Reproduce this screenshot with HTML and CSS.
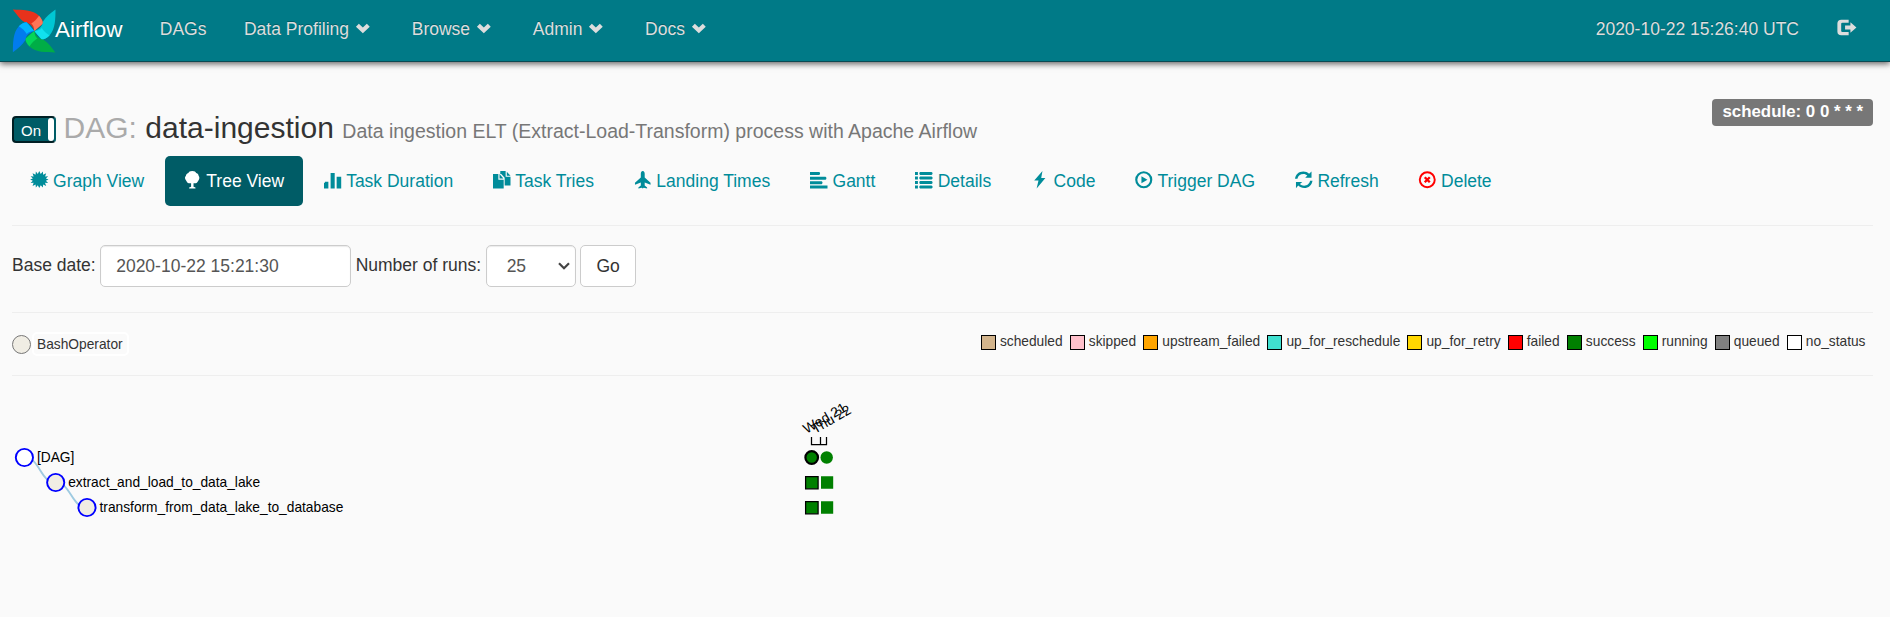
FILE: index.html
```html
<!DOCTYPE html>
<html lang="en">
<head>
<meta charset="utf-8">
<title>Airflow - data-ingestion</title>
<link rel="stylesheet" href="styles.css">
</head>
<body>
<svg class="defs" width="0" height="0">
  <symbol id="chev" viewBox="0 0 18 18"><path d="M2 8 5 5 9.100 8.800 13.200 5 16.200 8 9.100 14.600Z"/></symbol>
</svg>
<nav class="navbar">
  <a class="brand">
    <svg class="logo" width="44" height="44" viewBox="0 0 44 44">
      <path fill="#e8321c" d="M.8.4C10 .8 21 .6 27 6.8c2.500 2.700 3.800 5.600 4 7.600L22.300 22C20.400 15.500 16 13.600 12.500 13 7.800 10.500 5 5.500.8.4Z"/>
      <path fill="#ff7557" d="M27 6.800c2.500 2.700 3.800 5.600 4 7.600L22.300 22c-.2-4-1.300-6-3-7.500C22 13 25 10 27 6.800Z"/>
      <path fill="#00c7d4" d="M43.500.6C43.400 10 43.500 20 37.500 26.500c-2.700 2.700-5.500 3.700-7.800 4L22.300 22c6-2 8.200-5.500 8.700-9.500C34 7.500 38.500 4.500 43.500.6Z"/>
      <path fill="#11e1ee" d="M37.500 26.500c-2.700 2.700-5.500 3.700-7.800 4L22.300 22c4-.2 6-1.300 7.500-3 1.500 2.700 4.500 5.500 7.700 7.500Z"/>
      <path fill="#00ad46" d="M43.300 43.400C34 43.300 24 43.500 17.500 37.500c-2.700-2.700-3.900-5.500-4.200-7.700L22.300 22c2 6 5.200 8 9.200 8.800 4.800 2.900 8 7.700 11.800 12.600Z"/>
      <path fill="#04d659" d="M17.500 37.500c-2.700-2.700-3.900-5.500-4.200-7.700L22.300 22c.2 4 1.300 6 3 7.500-2.700 1.500-5.800 4.700-7.800 8Z"/>
      <path fill="#017cee" d="M.9 43.300C1 34 .8 24 6.800 17.300c2.700-2.700 5.500-3.700 7.800-4L22.300 22c-6 2-8.500 5.200-9 9.200C10 36.500 6 39.500.9 43.300Z"/>
      <path fill="#00b5ff" d="M6.800 17.300c2.700-2.700 5.500-3.700 7.800-4L22.300 22c-4 .2-6 1.300-7.500 3-1.500-2.700-4.700-5.700-8-7.700Z"/>
    </svg><span>Airflow</span>
  </a>
  <a class="navlink">DAGs</a>
  <a class="navlink menu">Data Profiling <svg class="glyph"><use href="#chev"/></svg></a>
  <a class="navlink menu">Browse <svg class="glyph"><use href="#chev"/></svg></a>
  <a class="navlink menu">Admin <svg class="glyph"><use href="#chev"/></svg></a>
  <a class="navlink menu">Docs <svg class="glyph"><use href="#chev"/></svg></a>
  <span class="spacer"></span>
  <a class="navlink">2020-10-22 15:26:40 UTC</a>
  <a class="navlink logout"><svg class="glyph" viewBox="0 0 18 18"><path d="M12 .8v3H5.500Q4.300 3.800 4.300 5v7q0 1.300 1.200 1.300H12v3.400H4.500Q.4 16.700.4 12.800V4.700Q.4.800 4.500.8ZM13.800 3.300 20 8.800l-6.200 5.400v-3.300H8.300V6.700h5.500Z"/></svg></a>
</nav>

<main class="page">
  <header class="head">
    <h3 class="title">
      <span class="toggle"><span class="on">On</span><span class="knob"></span></span>
      <span class="muted">DAG:</span> <span class="name">data-ingestion</span> <small>Data ingestion ELT (Extract-Load-Transform) process with Apache Airflow</small>
    </h3>
    <span class="schedule">schedule: 0 0 * * *</span>
  </header>

  <ul class="pills">
    <li><svg class="glyph" viewBox="0 0 18 18"><path d="M8.500 0 10 3 12.200.6 12.500 3.900 15.600 2.400 14.500 5.600 17.600 5.400 15.300 7.700 18 8.700 15.300 10 17.600 12.400 14.400 12.100 15.600 15.300 12.500 13.800 12.200 17 10 14.600 8.500 17.500 7 14.600 5 17 4.700 13.800 1.600 15.300 2.700 12.100 -.4 12.400 1.900 10 -.9 8.700 1.900 7.700 -.4 5.400 2.700 5.600 1.600 2.400 4.700 3.900 5 .6 7 3Z"/></svg> Graph View</li>
    <li class="active"><svg class="glyph" viewBox="0 0 18 18"><path d="M8.500 0C11 0 12 1 12.500 2 14.500 2.300 15 4 15 5c1 1 1.200 3 0 4.500-.8 1.500-1.700 3-3 3H9.800v3.800l2 .7v1H5.300v-1l2-.7v-3.800H5c-1.500 0-2.200-1.500-3-3C.6 8 .8 6 2 5c0-1 .8-2.700 2.500-3C5 1 6 0 8.500 0Z"/></svg> Tree View</li>
    <li><svg class="glyph" viewBox="0 0 18 18"><path d="M0 12h4.500v6H0zM1 11h3.500v1H1zM6.800 2h4.200v16H6.800zM13 6h4.700v12H13z"/></svg> Task Duration</li>
    <li><svg class="glyph" viewBox="0 0 18 18"><path d="M0 3h5.500v6H11v9H0zM6.700 3 10.700 7.700h-4zM7.500 0h5.500v6H18v9h-6V7L8.500 3h-1zM14.200.700 18 5h-3.800z"/></svg> Task Tries</li>
    <li><svg class="glyph" viewBox="0 0 18 18"><path d="M9 0c1.500 0 2 1.500 2 3v3.800l6 5.200v2.200l-6-2.500v3.300l2.500 2V18l-3.500-.7L9 18l-1-.7L4.500 18v-1l2.500-2v-3.300L1 14.200V12l6-5.200V3c0-1.500.5-3 2-3Z"/></svg> Landing Times</li>
    <li><svg class="glyph" viewBox="0 0 18 18"><path d="M0 1h9.500l.8.800v1.400l-.8.800H0zM0 6h16l.8.700v1.500L16 9H0zM0 10.500h12l.8.800v1.400l-.8.800H0zM0 15h18v3H0z"/></svg> Gantt</li>
    <li><svg class="glyph" viewBox="0 0 18 18"><path d="M0 1h3v3H0zM0 5.700h3v3H0zM0 10.300h3v3H0zM0 15h3v3H0zM5.300 1H17l1 .8v1.400l-1 .8H5.300l-.8-.8V1.800zM5.300 5.700H17l1 .8v1.400l-1 .8H5.300l-.8-.8V6.500zM5.300 10.300H17l1 .8v1.400l-1 .8H5.300l-.8-.8v-1.400zM5.300 15H17l1 .8v1.400l-1 .8H5.300l-.8-.8v-1.400z"/></svg> Details</li>
    <li><svg class="glyph" viewBox="0 0 18 18"><path d="M11.800 0 3.300 9.800h4.400L5.800 18l9-10.800h-4.300Z"/></svg> Code</li>
    <li><svg class="glyph" viewBox="0 0 18 18"><circle cx="9" cy="9" r="7.700" fill="none" stroke="currentColor" stroke-width="2.200"/><path d="M6.600 5.300 12.800 9l-6.200 3.700Z"/></svg> Trigger DAG</li>
    <li><svg class="glyph" viewBox="0 0 18 18"><path d="M0 8C.6 3.500 4 .6 8.500.6c2.500 0 4.300.8 6 2.300L17 .5V7h-6.500l2.200-2.300C11.500 3.600 10.300 3 8.700 3 5.500 3 3 5 2.500 8ZM18 10c-.6 4.500-4 7.500-8.500 7.500-2.500 0-4.600-1-6.200-2.500L1 17.800V11.200h6.500L5.100 13.400c1.200 1.200 2.500 1.700 4.200 1.700 3.200 0 5.700-2.100 6.200-5.100Z"/></svg> Refresh</li>
    <li><svg class="glyph red" viewBox="0 0 18 18"><circle cx="8.500" cy="9" r="7.700" fill="none" stroke="currentColor" stroke-width="2"/><path d="m5.900 6.400 5.200 5.200m0-5.200-5.200 5.200" stroke="currentColor" stroke-width="2.400"/></svg> Delete</li>
  </ul>

  <form class="controls">
    <label>Base date:</label>
    <span class="field date">2020-10-22 15:21:30</span>
    <label>Number of runs:</label>
    <span class="field runs">25<svg width="12" height="8" viewBox="0 0 12 8"><path d="M1 1.200 6 6.200 11 1.200" fill="none" stroke="#444" stroke-width="2.200"/></svg></span>
    <span class="field go">Go</span>
  </form>

  <section class="legend">
    <div class="operator"><i></i><span>BashOperator</span></div>
    <div class="states">
      <span><i class="scheduled"></i>scheduled</span>
      <span><i class="skipped"></i>skipped</span>
      <span><i class="upstream"></i>upstream_failed</span>
      <span><i class="reschedule"></i>up_for_reschedule</span>
      <span><i class="retry"></i>up_for_retry</span>
      <span><i class="failed"></i>failed</span>
      <span><i class="success"></i>success</span>
      <span><i class="running"></i>running</span>
      <span><i class="queued"></i>queued</span>
      <span><i class="none"></i>no_status</span>
    </div>
  </section>

  <svg class="tree" width="1860" height="200" viewBox="12 380 1860 200">
    <g class="link"><path d="M24.500 457.500C40 457.500 40 482.500 55.500 482.500M55.500 482.500C71 482.500 71 507.500 87 507.500"/></g>
    <g class="node">
      <circle cx="24.400" cy="457.500" r="8.600" fill="#fff"/>
      <circle cx="55.700" cy="482.500" r="8.600"/>
      <circle cx="87" cy="507.500" r="8.600"/>
    </g>
    <text x="36.900" y="462">[DAG]</text>
    <text x="68.200" y="487">extract_and_load_to_data_lake</text>
    <text x="99.500" y="512">transform_from_data_lake_to_database</text>
    <text transform="translate(806.500 434) rotate(-30)">Wed 21</text>
    <text transform="translate(815 434) rotate(-30)">Thu 22</text>
    <path class="axis" d="M811.500 437v7.500h15v-7.500M820.500 437v7.500"/>
    <circle cx="811.700" cy="457.500" r="6.300" fill="green" stroke="#000" stroke-width="2.200"/>
    <circle cx="826.700" cy="457.500" r="6.200" fill="green"/>
    <g fill="green">
      <path stroke="#000" stroke-width="1.250" d="M805.600 476.600h12.500v12.200h-12.500zM805.600 501.600h12.500v12.200h-12.500z"/>
      <path d="M821 476.200h12.200v12.500H821zM821 501.200h12.200v12.500H821z"/>
    </g>
  </svg>
</main>
</body>
</html>
```
FILE: styles.css
```css
* { box-sizing: border-box; }
body {
  margin: 0;
  height: 617px;
  overflow: hidden;
  background: #fafafa;
  color: #333;
  font: 17.5px/25px "Liberation Sans", Arial, sans-serif;
}
.defs { display: block; }
.navbar {
  display: flex;
  align-items: center;
  height: 62px;
  padding: 0 12px;
  background: #007a87;
  border-bottom: 1px solid #0a4a53;
  box-shadow: 0 2px 6px rgba(0, 0, 0, .6);
}
.brand {
  display: flex;
  align-items: center;
  margin-right: 18.500px;
  color: #fff;
  font-size: 22.500px;
  text-shadow: 0 -1px 0 rgba(0, 0, 0, .25);
}
.brand span { margin: -2px 0 0 -1px; }
.navlink {
  padding: 0 18.750px;
  height: 28px;
  color: #ddd;
  line-height: 25px;
  white-space: nowrap;
  text-shadow: 0 -1px 0 rgba(0, 0, 0, .25);
}
.menu { padding-right: 21.600px; }
.spacer { flex: 1; }
.logout { padding-right: 24px; }
.glyph {
  display: inline-block;
  width: 17.500px;
  height: 17.500px;
  vertical-align: -1.500px;
  fill: currentColor;
  overflow: visible;
}
.page { padding: 0 17px 0 12px; }
.head { display: flex; justify-content: space-between; padding-top: 37px; }
.title {
  display: flex;
  align-items: baseline;
  height: 57px;
  margin: 0;
  padding-top: 10px;
  font-size: 30px;
  font-weight: 400;
  line-height: 37px;
  white-space: nowrap;
}
.toggle {
  display: flex;
  align-self: flex-start;
  justify-content: space-between;
  width: 44px;
  height: 27px;
  margin: 7px 7.500px 0 0;
  border: 2px solid #001f24;
  border-right-color: #005c66;
  border-radius: 4px;
  background: #005c66;
  color: #fff;
  font-size: 15px;
  line-height: 25px;
}
.on { padding-left: 7px; }
.knob { width: 6px; border-radius: 3px; background: #fff; }
.muted { margin-right: 8.500px; color: #aaa; }
.name { margin-right: 8.500px; }
.title small { color: #777; font-size: 19.500px; }
.schedule {
  height: 27px;
  padding: 0 10px;
  border-radius: 4px;
  background: #777;
  color: #fff;
  font-size: 16.875px;
  font-weight: 700;
  line-height: 25px;
}
.pills {
  display: flex;
  gap: 2.500px;
  margin: 0;
  padding: 0 0 19px;
  border-bottom: 1px solid #eee;
  list-style: none;
}
.pills li {
  height: 50px;
  padding: 12.500px 18.750px;
  border-radius: 5px;
  color: #008c9a;
  white-space: nowrap;
}
.pills .active { background: #005c66; color: #fff; }
.pills .red { color: red; }
.controls {
  display: flex;
  gap: 4.500px;
  height: 87px;
  padding-top: 19px;
  border-bottom: 1px solid #eee;
}
.controls label { line-height: 40px; }
.field {
  height: 42px;
  border: 1px solid #ccc;
  border-radius: 5px;
  background: #fff;
  color: #555;
  line-height: 40px;
  box-shadow: inset 0 1px 1px rgba(0, 0, 0, .08);
}
.date { width: 251px; padding-left: 15px; }
.runs {
  display: flex;
  align-items: center;
  justify-content: space-between;
  width: 90px;
  padding: 0 5px 0 20px;
}
.go { width: 56px; color: #333; text-align: center; box-shadow: none; }
.legend {
  display: flex;
  justify-content: space-between;
  height: 63px;
  border-bottom: 1px solid #eee;
  font-size: 13.750px;
  line-height: 20px;
}
.operator { display: flex; padding-top: 19px; }
.operator i {
  width: 19px;
  height: 19px;
  margin-top: 3px;
  border: 1px solid #777;
  border-radius: 50%;
  background: #f0ede4;
}
.operator span {
  height: 24px;
  margin-left: 1px;
  padding: 1px 4px 0 3px;
  border: 2px solid #fff;
  border-radius: 5px;
}
.states { display: flex; gap: 7.200px; padding: 19px 7.500px 0 0; }
.states span { display: flex; height: 20px; }
.states i {
  width: 15px;
  height: 15px;
  margin: 3px 4px 0 0;
  border: 1px solid #000;
}
.scheduled { background: tan; }
.skipped { background: pink; }
.upstream { background: orange; }
.reschedule { background: turquoise; }
.retry { background: gold; }
.failed { background: red; }
.success { background: green; }
.running { background: lime; }
.queued { background: gray; }
.none { background: #fff; }
.tree { display: block; margin-top: 4px; font-size: 13.750px; }
.link path { fill: none; stroke: #9ecae1; stroke-width: 1.900; }
.node circle { stroke: blue; stroke-width: 1.900; }
.node circle:not([fill]) { fill: #f0ede4; }
.axis { fill: none; stroke: #000; stroke-width: 1.250; }
```
